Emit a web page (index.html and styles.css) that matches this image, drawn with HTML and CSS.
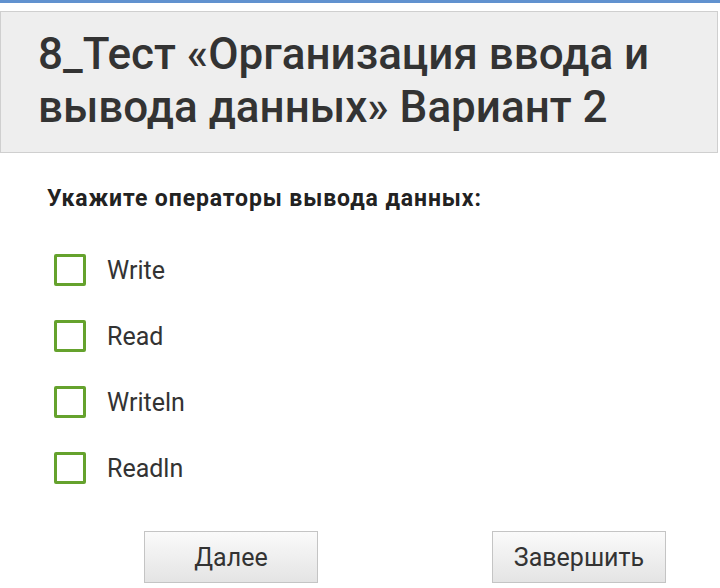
FILE: index.html
```html
<!DOCTYPE html>
<html lang="ru">
<head>
<meta charset="utf-8">
<link rel="stylesheet" href="styles.css">
</head>
<body>
<div class="topbar"></div>
<div class="header">
  <h1 class="title">8_Тест «Организация ввода и вывода данных» Вариант 2</h1>
</div>
<div class="content">
  <p class="question">Укажите операторы вывода данных:</p>
  <ul class="options">
    <li class="option"><span class="box"></span><span class="label">Write</span></li>
    <li class="option"><span class="box"></span><span class="label">Read</span></li>
    <li class="option"><span class="box"></span><span class="label">Writeln</span></li>
    <li class="option"><span class="box"></span><span class="label">Readln</span></li>
  </ul>
  <div class="buttons">
    <button class="btn">Далее</button>
    <button class="btn">Завершить</button>
  </div>
</div>
</body>
</html>
```
FILE: styles.css
```css
html, body {
  margin: 0;
  padding: 0;
  background: #ffffff;
  font-family: Roboto, "Noto Sans", sans-serif;
  color: #333333;
}
.topbar {
  height: 3px;
  background: #6192cf;
  margin-bottom: 8px;
}
.header {
  margin: 0 2px 0 0;
  background: #eeeeee;
  border: 1px solid #cfcfcf;
  padding: 16px 20px 18px 37px;
}
.title {
  margin: 0;
  font-size: 44px;
  line-height: 53px;
  font-weight: 500;
  color: #333333;
}
.content {
  padding: 0 0 0 47px;
}
.question {
  margin: 32px 0 0 0;
  font-size: 23px;
  line-height: 27px;
  font-weight: 700;
  letter-spacing: 0.9px;
  color: #222222;
}
.options {
  list-style: none;
  margin: 25px 0 0 0;
  padding: 0;
}
.option {
  height: 66px;
  display: flex;
  align-items: center;
}
.box {
  width: 26px;
  height: 26px;
  border: 3px solid #65a22d;
  border-radius: 2px;
  margin-left: 7px;
  background: #ffffff;
}
.label {
  margin-left: 21px;
  font-size: 25px;
  color: #333333;
}
.buttons {
  margin-top: 30px;
  padding-left: 97px;
  display: flex;
  gap: 174px;
}
.btn {
  width: 174px;
  height: 52px;
  border: 1px solid #c4c4c4;
  border-radius: 0;
  background: linear-gradient(#fafafa, #e4e4e4);
  font-family: Roboto, "Noto Sans", sans-serif;
  font-size: 25px;
  color: #333333;
  padding: 0;
}
```
